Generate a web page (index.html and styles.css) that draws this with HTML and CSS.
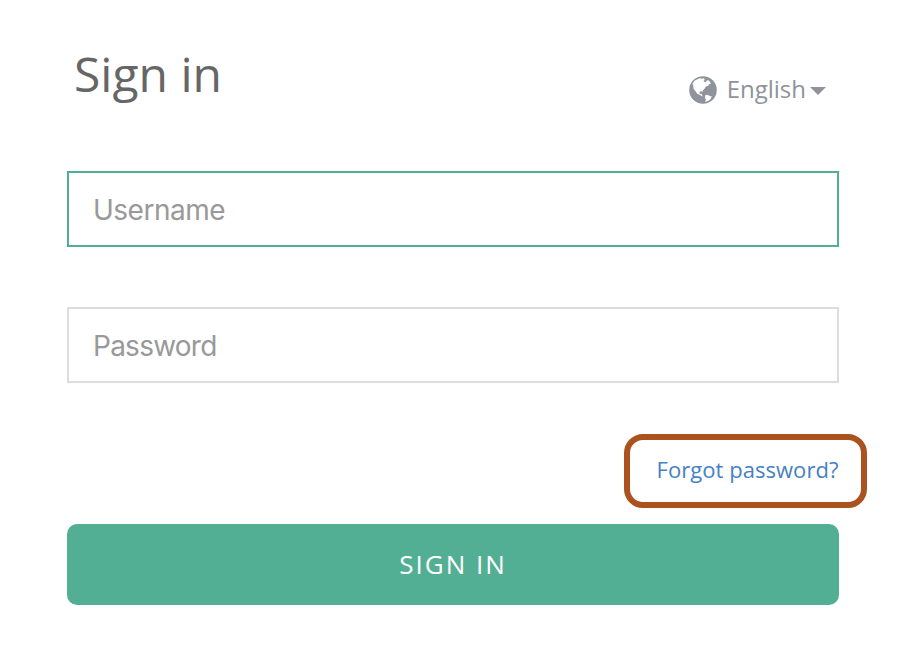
FILE: index.html
```html
<!DOCTYPE html>
<html lang="en">
<head>
<meta charset="utf-8">
<title>Sign in</title>
<link rel="stylesheet" href="styles.css">
</head>
<body>
<main class="login">
  <header class="header">
    <h1 class="title">Sign in</h1>
    <button class="language" type="button">
      <svg class="globe" viewBox="0 0 28 28" aria-hidden="true">
        <circle cx="14" cy="14" r="13.8" fill="#8e939c"/>
        <path fill="#fff" d="M5.8 4.6 8.4 3.2l2.6-.9 2 .5 2-.5.7 1.2-1.2 1.7 2 1 1.5-2 2 .2 2 3.2-1.7.4-1.2 1.8-2.2.7-1.4 2.2-1.8 1.7.2 1.6-2-.9-1.5 1.4.5 1.4 1.7-.2.3 1.5 1.3 1-1.5.1-2-1.5-2.5-1-1.8-2.8-1.8-2-.4-3.2-.7-2zM16.2 19.2l2-.5 2.2 1 2.4.7-.8 2-2 2.2-3.7 1.5.5-2.7-1-2.2z"/>
      </svg>
      <span class="language-name">English</span>
      <span class="caret"></span>
    </button>
  </header>
  <form class="form">
    <input class="field field-active" type="text" placeholder="Username" aria-label="Username">
    <input class="field field-password" type="password" placeholder="Password" aria-label="Password">
    <div class="forgot"><a class="forgot-link" href="#">Forgot password?</a></div>
    <button class="submit" type="button">SIGN IN</button>
  </form>
</main>
</body>
</html>
```
FILE: styles.css
```css
* { box-sizing: border-box; }
body { margin: 0; background: #fff; font-family: "Open Sans", sans-serif; }
.login { width: 772px; margin-left: 67px; padding-top: 41px; }
.header { display: flex; justify-content: space-between; height: 130px; padding: 0 13px 0 7px; }
.title { margin: 0; font-size: 48px; font-weight: 400; line-height: 66px; color: #666; }
.language { display: flex; align-items: center; height: 34px; margin-top: 32px; padding: 0; border: 0; background: none; font: 24px "Open Sans", sans-serif; color: #8e939c; }
.globe { width: 28px; height: 28px; }
.language-name { margin: 0 0 4px 10px; }
.caret { margin: 2px 0 0 4px; border: 8px solid transparent; border-top-color: #8e939c; border-bottom: 0; }
.form { display: flex; flex-direction: column; }
.field { height: 76px; margin: 0 0 60px; padding: 1px 24px 0; border: 2px solid #ddd; border-radius: 0; font: 28px Inter, sans-serif; letter-spacing: -0.5px; outline: 0; }
.field-active { border-color: #53af94; }
.field-password { letter-spacing: -0.75px; }
.field::placeholder { color: #999; opacity: 1; }
.forgot { display: flex; justify-content: flex-end; margin: -9px -28px 16px 0; }
.forgot-link { display: flex; align-items: center; justify-content: center; width: 243px; height: 74px; padding: 0 0 5px 4px; border: 6px solid #ab531e; border-radius: 19px; color: #4581c3; font-size: 22px; letter-spacing: 0.05px; text-decoration: none; }
.submit { height: 81px; padding: 0 0 2px; border: 0; border-radius: 10px; background: #53af94; color: #fff; font: 26px "Open Sans", sans-serif; letter-spacing: 2px; }
```
